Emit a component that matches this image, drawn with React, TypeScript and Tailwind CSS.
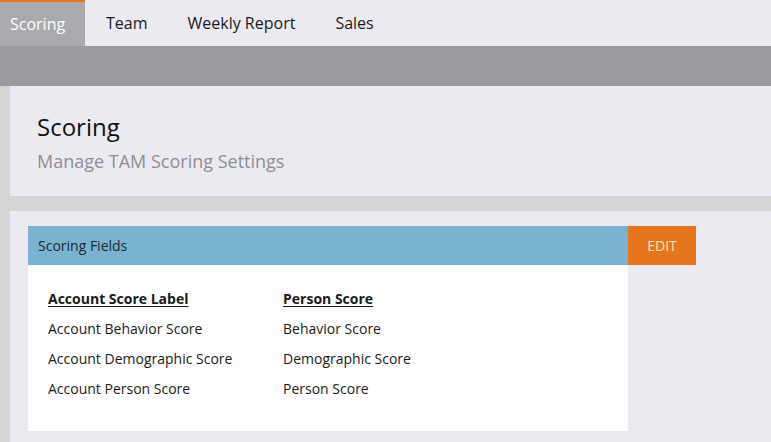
import React from 'react';

const tabs = ['Scoring', 'Team', 'Weekly Report', 'Sales'];

const rows: [string, string][] = [
  ['Account Behavior Score', 'Behavior Score'],
  ['Account Demographic Score', 'Demographic Score'],
  ['Account Person Score', 'Person Score'],
];

const App: React.FC = () => {
  return (
    <div
      className="w-[771px] h-[442px] overflow-hidden flex flex-col bg-[#d4d4d4]"
      style={{ fontFamily: '"Open Sans", "Noto Sans", sans-serif' }}
    >
      {/* Tab bar */}
      <nav className="h-[46px] flex bg-[#ebeaf0] shrink-0">
        {tabs.map((tab, i) =>
          i === 0 ? (
            <div
              key={tab}
              className="w-[85px] flex items-center pl-[10px] bg-[#a9a9ae] border-t-2 border-[#e5761e] text-white text-[16px]"
            >
              {tab}
            </div>
          ) : (
            <div key={tab} className="flex items-center pl-[21px] pr-[19px] text-[16px] text-[#1a1a1a]">
              {tab}
            </div>
          )
        )}
      </nav>

      {/* Sub bar */}
      <div className="h-[40px] bg-[#9b9aa0] shrink-0" />

      {/* Page header */}
      <div className="ml-[10px] h-[110px] bg-[#ebeaf0] px-[27px] pt-[26px] shrink-0">
        <h1 className="text-[24px] leading-[30px] text-[#111]">Scoring</h1>
        <p className="text-[18px] leading-[24px] mt-[7px] text-[#8e8e92]">Manage TAM Scoring Settings</p>
      </div>

      {/* Content panel */}
      <div className="ml-[10px] mt-[15px] flex-1 bg-[#ebeaf0] pl-[18px] pt-[15px]">
        <div className="flex">
          <div className="w-[600px]">
            <div className="h-[39px] bg-[#7ab3cf] flex items-center px-[10px] text-[14px] text-[#1a2a33]">
              Scoring Fields
            </div>
            <div className="bg-white h-[166px] pl-[20px] pt-[24px]">
              <div className="grid grid-cols-[235px_1fr] text-[14px] text-[#1a1a1a]">
                <div className="font-bold underline underline-offset-2 leading-[20px] mb-[10px]">Account Score Label</div>
                <div className="font-bold underline underline-offset-2 leading-[20px] mb-[10px]">Person Score</div>
                {rows.map(([a, b]) => (
                  <React.Fragment key={a}>
                    <div className="leading-[20px] mb-[10px]">{a}</div>
                    <div className="leading-[20px] mb-[10px]">{b}</div>
                  </React.Fragment>
                ))}
              </div>
            </div>
          </div>
          <button className="w-[68px] h-[39px] bg-[#e5761e] text-[#fde9b8] text-[14px] flex items-center justify-center">
            EDIT
          </button>
        </div>
      </div>
    </div>
  );
};

export default App;
